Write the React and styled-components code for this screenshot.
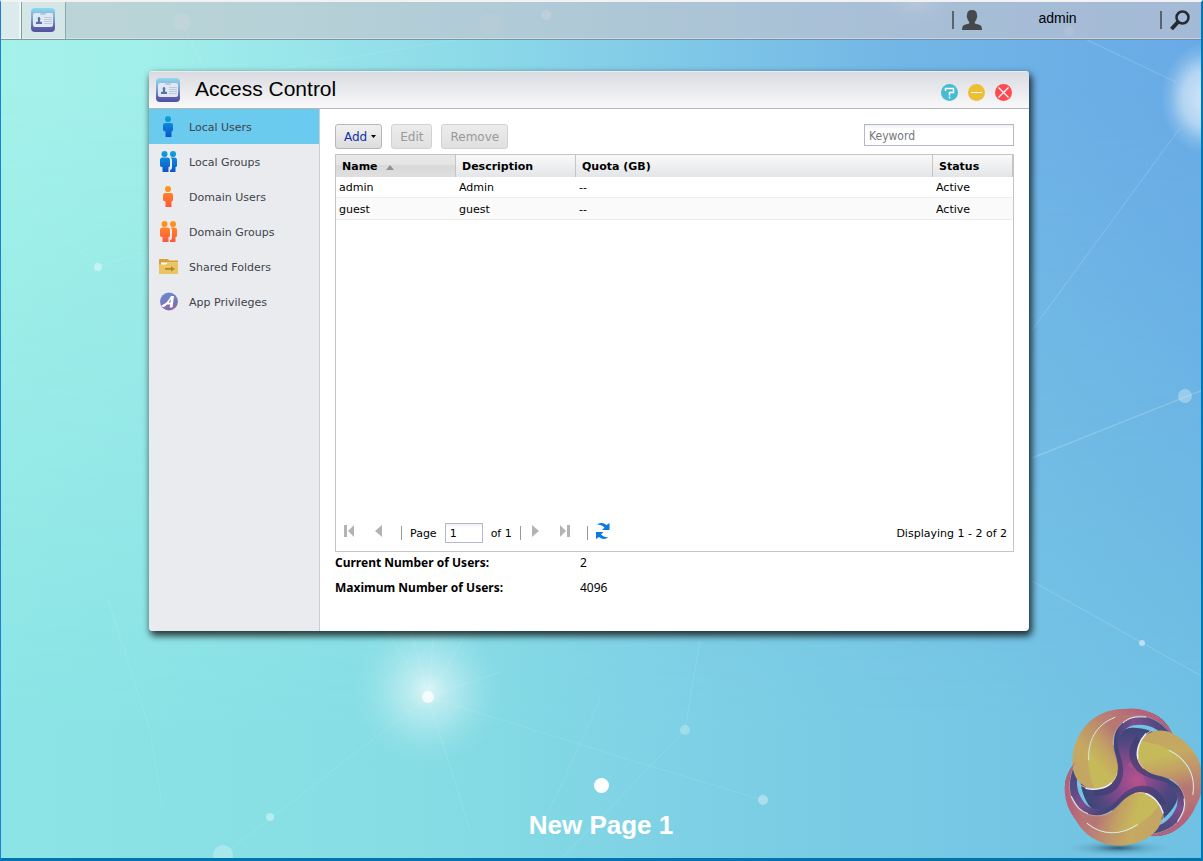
import React, { useState } from "react"
import styled, { createGlobalStyle, css } from "styled-components"

const GlobalStyle = createGlobalStyle`
    * {
        box-sizing: border-box;
    }
    body {
        margin: 0;
        font-family: "DejaVu Sans", Verdana, sans-serif;
        font-size: 11px;
        color: #000;
    }
    button, input {
        font-family: inherit;
        font-size: inherit;
    }
    svg {
        flex: none;
    }
`;

/* ---------- desktop ---------- */

const Desktop = styled.div`
    position: relative;
    min-height: 100vh;
    display: flex;
    flex-direction: column;
    border-top: 2px solid #f3f2f3;
    border-left: 1px solid #1a80dc;
    border-right: 2px solid #0078b4;
    border-bottom: 3px solid #0074ac;
    overflow: hidden;
`;

const WallpaperSvg = styled.svg`
    position: absolute;
    top: -2px;
    left: -1px;
    width: calc(100% + 3px);
    height: calc(100% + 5px);
    z-index: -1;
`;

const TopBar = styled.header`
    display: flex;
    align-items: stretch;
    height: 38px;
    background: rgba(200, 196, 204, 0.62);
    border-bottom: 1px solid rgba(70, 110, 120, 0.55);
    box-shadow: inset 0 -1px rgba(255, 255, 255, 0.35);
`;

const BarEdge = styled.div`
    width: 21px;
    background: rgba(255, 255, 255, 0.5);
    border-right: 1px solid #7f9fa1;
    box-shadow: inset -2px 0 rgba(255, 255, 255, 0.6);
`;

const TaskButton = styled.button`
    display: flex;
    width: 44px;
    padding: 6px 9px;
    border: 0;
    border-right: 1px solid #8ba9ab;
    background: rgba(255, 255, 255, 0.4);
    cursor: pointer;
`;

const BarRight = styled.div`
    display: flex;
    align-items: center;
    margin-left: auto;
    padding-bottom: 1px;
`;

const Divider = styled.span`
    width: 2px;
    height: 18px;
    background: #5d6268;
`;

const UserButton = styled.button`
    display: flex;
    align-items: center;
    width: 206px;
    height: 36px;
    padding: 0 0 0 8px;
    border: 0;
    background: none;
    font: 14px "Liberation Sans", Arial, sans-serif;
    color: #000;
    cursor: pointer;
`;

const UserName = styled.span`
    flex: 1;
    padding: 0 27px 5px 0;
    text-align: center;
`;

const SearchButton = styled.button`
    display: flex;
    padding: 0 11px 0 8px;
    border: 0;
    background: none;
    cursor: pointer;
`;

const PageIndicator = styled.nav`
    display: flex;
    flex-direction: column;
    align-items: center;
    margin-top: auto;
    padding-bottom: 18px;
`;

const PageDot = styled.button`
    width: 15px;
    height: 15px;
    padding: 0;
    border: 0;
    border-radius: 50%;
    background: #fff;
`;

const PageName = styled.div`
    margin-top: 17px;
    font: bold 26px/30px "Liberation Sans", Arial, sans-serif;
    color: #fff;
`;

const Watermark = styled.svg`
    position: absolute;
    right: -2px;
    bottom: -3px;
    width: 163px;
    height: 171px;
`;

/* ---------- window ---------- */

const Window = styled.section`
    display: flex;
    flex-direction: column;
    min-height: 560px;
    margin: 31px 172px 0 148px;
    border-radius: 4px;
    background: #fff;
    box-shadow: 2px 4px 7px 1px rgba(0, 0, 0, 0.75);
    overflow: hidden;
`;

const TitleBar = styled.div`
    display: flex;
    align-items: center;
    height: 38px;
    padding: 0 17px 0 7px;
    border-bottom: 1px solid #b5b6b9;
    background: linear-gradient(#d9dae0, #f9f9fa);
    box-shadow: inset 0 1px #ececee;
`;

const Title = styled.h1`
    flex: 1;
    margin: 0 0 0 15px;
    padding-bottom: 2px;
    font: 21px "Liberation Sans", Arial, sans-serif;
`;

const WindowButtons = styled.div`
    display: flex;
    gap: 10px;
    padding-top: 6px;
`;

const RoundButton = styled.button`
    display: flex;
    width: 17px;
    height: 17px;
    padding: 0;
    border: 0;
    border-radius: 50%;
    background: ${(props) => props.$color};
    cursor: pointer;
`;

const WindowBody = styled.div`
    display: flex;
    flex: 1;
`;

const Sidebar = styled.nav`
    flex: none;
    width: 171px;
    border-right: 1px solid #cbcdd2;
    background: #e9ebef;
`;

const SideItem = styled.button`
    display: flex;
    align-items: center;
    gap: 10px;
    width: 100%;
    height: 35px;
    padding: 1px 10px 0;
    border: 0;
    background: ${(props) => (props.$active ? "#6bcbef" : "none")};
    color: #40434a;
    text-align: left;
    cursor: pointer;
`;

const Content = styled.main`
    display: flex;
    flex: 1;
    flex-direction: column;
    min-width: 0;
    padding: 15px 15px 33px;
`;

const Toolbar = styled.div`
    display: flex;
    align-items: flex-start;
    gap: 9px;
    margin-bottom: 5px;
`;

const ToolButton = styled.button`
    display: flex;
    align-items: center;
    gap: 4px;
    height: 25px;
    padding: 0 ${(props) => (props.$menu ? "5px" : "8px")} 0 8px;
    border: 1px solid #b7b7b7;
    border-radius: 3px;
    background: linear-gradient(#f1f1f1, #dcdcdc);
    color: #1131a6;
    font-size: 12px;
    cursor: pointer;

    &:disabled {
        border-color: #d2d2d2;
        background: linear-gradient(#ececec, #e0e0e0);
        color: #999;
        cursor: default;
    }
`;

const field = css`
    border: 1px solid #b5b8c8;
    border-radius: 0;
    background: linear-gradient(#eef0f2, #fff 4px);
    outline: 0;
`;

const Keyword = styled.input`
    ${field}
    width: 150px;
    height: 22px;
    margin-left: auto;
    padding: 1px 4px 0;
    font: 12px "DejaVu Sans Condensed", "Noto Sans", sans-serif;

    &::placeholder {
        color: #75777c;
        opacity: 1;
    }
`;

const GridPanel = styled.div`
    display: flex;
    flex: 1;
    flex-direction: column;
    border: 1px solid #c5c5c5;
`;

const Table = styled.table`
    width: 100%;
    table-layout: fixed;
    border-collapse: separate;
    border-spacing: 0;
`;

const HeadCell = styled.th`
    height: 22px;
    padding: 0 6px;
    border-right: 1px solid #c5c5c5;
    background: ${(props) =>
        props.$sorted
            ? "linear-gradient(#e9e9ea, #e4e4e4 45%, #d9d9da 46%, #dfdfe0)"
            : "linear-gradient(#f9f9f9, #e4e5e7)"};
    text-align: left;
`;

const SortArrow = styled.svg`
    margin-left: 8px;
`;

const Row = styled.tr`
    height: ${(props) => (props.$odd ? "22px" : "21px")};
    background: ${(props) => (props.$odd ? "#fafafa" : "#fff")};
`;

const Cell = styled.td`
    padding: 1px 3px 0;
    border-bottom: 1px solid #ededed;
`;

const Pager = styled.div`
    display: flex;
    align-items: center;
    height: 36px;
    margin-top: auto;
    padding: 0 6px 0 7px;
`;

const PagerButton = styled.button`
    display: flex;
    align-items: center;
    justify-content: center;
    width: ${(props) => (props.$wide ? "14px" : "12px")};
    height: 20px;
    margin-bottom: 4px;
    padding: 0;
    border: 0;
    background: none;
`;

const PagerGap = styled.span`
    width: ${(props) => (props.$short ? "8px" : "18px")};
`;

const PagerLine = styled.span`
    width: 1px;
    height: 14px;
    margin: 0 8px;
    background: #98998f;
`;

const PageInput = styled.input`
    ${field}
    width: 38px;
    height: 20px;
    margin: 0 8px;
    padding: 0 4px;
`;

const Summary = styled.span`
    margin-left: auto;
`;

const Totals = styled.dl`
    display: grid;
    grid-template-columns: 245px 1fr;
    row-gap: 4px;
    margin: 0;
    font: 12px/21px "Noto Sans", Tahoma, sans-serif;
`;

const TotalLabel = styled.dt`
    font-weight: bold;
`;

const TotalValue = styled.dd`
    margin: 0;
`;

/* ---------- icons ---------- */

const CardIcon = ({ id }) => (
    <svg width="24" height="24" viewBox="0 0 24 24">
        <defs>
            <linearGradient id={id} x2="0" y2="1">
                <stop offset="0" stopColor="#8fd9f0" />
                <stop offset="0.5" stopColor="#7a9ccb" />
                <stop offset="0.8" stopColor="#5c62ab" />
                <stop offset="1" stopColor="#5450a0" />
            </linearGradient>
        </defs>
        <rect width="24" height="24" rx="4" fill={`url(#${id})`} />
        <rect x="2" y="5" width="20" height="14" rx="2" fill="#dfe8f3" />
        <rect x="9" y="5" width="6" height="2" rx="1" fill="#b7cbe0" />
        <path d="M8 9a1.500 1.800 0 0 1 1 3v1.500l2 .5v2H5v-2l2-.5V12a1.500 1.800 0 0 1 1-3z" fill="#5a70a8" />
        <path d="M13 9.500h8M13 11.500h8M13 13.500h8M13 15.500h8" stroke="#bcc9d8" />
    </svg>
)

const PersonIcon = ({ from, to, id, group }) => (
    <svg width="20" height="22" viewBox="0 0 20 22">
        <defs>
            <linearGradient id={id} x1="0" y1="0" x2="0" y2="22" gradientUnits="userSpaceOnUse">
                <stop offset="0" stopColor={from} />
                <stop offset="1" stopColor={to} />
            </linearGradient>
        </defs>
        <g fill={`url(#${id})`}>
            {group ? (
                <>
                    <circle cx="5.500" cy="3" r="3" />
                    <path d="M3 6.500h5.500Q11 6.500 11 9v5.500q0 1.500-1.500 1.500v5h-6v-5Q1 16 1 14.500V9q0-2.500 2-2.500z" />
                    <circle cx="14" cy="3" r="3" />
                    <path d="M11.500 6.500h4Q18 6.500 18 9v5.500q0 1.500-1.500 1.500v5H11v-2q2 0 2-3V9q0-1.500-1.500-2.500z" />
                </>
            ) : (
                <>
                    <circle cx="9" cy="3" r="3" />
                    <path d="M6.500 7h5.500q2 0 2 2v4.500q0 2-1.500 2V21h-6v-5.500Q4 15.500 4 13.500V9q0-2 2.500-2z" />
                </>
            )}
        </g>
    </svg>
)

const FolderIcon = () => (
    <svg width="20" height="18" viewBox="0 0 20 18">
        <path d="M0 2q0-1 1-1h7.500q1 0 1.500 1.500h9V8H0z" fill="#d6a137" />
        <path d="M2 4.500h17V9H2z" fill="#fff" />
        <path d="M0 6.500h7L9 4.500h10V15.500q0 .5-.5.5H.5Q0 16 0 15.500z" fill="#edc35f" />
        <path d="M6 10h6V8.200l4 2.700-4 2.700v-1.800H6z" fill="#ac8636" />
    </svg>
)

const AppIcon = () => (
    <svg width="20" height="20" viewBox="0 0 20 20">
        <defs>
            <linearGradient id="app-fill" x2="0.3" y2="1">
                <stop offset="0" stopColor="#5e91d2" />
                <stop offset="1" stopColor="#8c68ae" />
            </linearGradient>
        </defs>
        <circle cx="10" cy="9.500" r="9" fill="url(#app-fill)" />
        <path d="M2.500 13.500Q7 12 9.500 8L12 4h3l-1.500 11.500h-2.800l.4-3H8Q5.500 15.500 3.500 15z" fill="#fff" />
        <path d="M9.500 10.500h2L12.100 7z" fill="#7780c4" />
    </svg>
)

const UserIcon = () => (
    <svg width="20" height="20" viewBox="0 0 20 20">
        <path
            d="M10 0q5 0 5 5 .7 1 0 2.500Q14.300 10.500 12.800 12v1.500l5.200 1.500q2 1 2 5H0q0-4 2-5l5.200-1.500V12Q5.700 10.500 5 7.500 4.300 6 5 5q0-5 5-5z"
            fill="#45494e"
        />
    </svg>
)

const SearchIcon = () => (
    <svg width="20" height="21" viewBox="0 0 20 21">
        <circle cx="12.500" cy="7.500" r="6" fill="none" stroke="#252a2f" strokeWidth="2.500" />
        <path d="M8 12l-6.500 7" stroke="#252a2f" strokeWidth="4" />
    </svg>
)

const HelpIcon = () => (
    <svg width="17" height="17" viewBox="0 0 17 17" fill="none" stroke="#fff" strokeWidth="1.500">
        <path d="M4.500 7V4.500h8v4h-4v3M8.500 12.500v2" />
    </svg>
)

const MinimizeIcon = () => (
    <svg width="17" height="17" viewBox="0 0 17 17" stroke="#fff">
        <path d="M3 8.500h11" />
    </svg>
)

const CloseIcon = () => (
    <svg width="17" height="17" viewBox="0 0 17 17" stroke="#fff" strokeWidth="1.200">
        <path d="M3.500 3.500l10 10M13.500 3.500l-10 10" />
    </svg>
)

const PageArrow = ({ flip, bar }) => (
    <svg width="12" height="12" viewBox="0 0 12 12" fill="#b3b3b3">
        <g transform={flip ? "matrix(-1 0 0 1 12 0)" : undefined}>
            {bar && <path d="M1 0h3v12H1z" />}
            <path d={bar ? "M11 0v12L5 6z" : "M9 0v12L2 6z"} />
        </g>
    </svg>
)

const RefreshIcon = () => (
    <svg width="14" height="16" viewBox="0 0 14 16" fill="#0b78e3">
        <path d="M1 1.500Q6-1.500 10.500 2L13.500 0v7H6l2.500-2.500Q5.500 1.500 1 1.500z" />
        <path d="M12.500 14.500Q7.500 17.500 3 14L0 16V9h7.500L5 11.500Q8 14.500 12.500 14.500z" />
    </svg>
)

/* ---------- drawings ---------- */

const dots = [
    [182, 22, 9, 0.2],
    [546, 15, 5, 0.3],
    [490, 24, 11, 0.12],
    [1069, 31, 5, 0.15],
    [98, 267, 4, 0.4],
    [1185, 396, 7, 0.3],
    [1142, 643, 3, 0.5],
    [685, 730, 5, 0.25],
    [763, 800, 5, 0.35],
    [270, 817, 4, 0.4],
    [223, 855, 10, 0.25],
    [428, 697, 6, 0.75],
]

const Wallpaper = () => (
    <WallpaperSvg viewBox="0 0 1203 861" preserveAspectRatio="none" aria-hidden="true">
        <defs>
            <linearGradient id="sky-top" x2="1" y2="0">
                <stop offset="0" stopColor="#a4f2ea" />
                <stop offset="0.13" stopColor="#a1efea" />
                <stop offset="0.4" stopColor="#8cd9e9" />
                <stop offset="0.75" stopColor="#72b6e6" />
                <stop offset="1" stopColor="#68aae6" />
            </linearGradient>
            <linearGradient id="sky-bottom" x2="1" y2="0">
                <stop offset="0" stopColor="#8ce4e5" />
                <stop offset="0.35" stopColor="#86dde4" />
                <stop offset="0.6" stopColor="#7dcfe5" />
                <stop offset="1" stopColor="#70c0e3" />
            </linearGradient>
            <linearGradient id="fade" x2="0" y2="1">
                <stop offset="0.1" stopColor="#000" />
                <stop offset="0.85" stopColor="#fff" />
            </linearGradient>
            <mask id="fade-mask">
                <rect width="1203" height="861" fill="url(#fade)" />
            </mask>
            <radialGradient id="glow">
                <stop offset="0" stopColor="#fff" stopOpacity="0.7" />
                <stop offset="0.25" stopColor="#fff" stopOpacity="0.42" />
                <stop offset="0.6" stopColor="#fff" stopOpacity="0.16" />
                <stop offset="0.8" stopColor="#fff" stopOpacity="0.05" />
                <stop offset="1" stopColor="#fff" stopOpacity="0" />
            </radialGradient>
            <radialGradient id="sun">
                <stop offset="0" stopColor="#fff" stopOpacity="0.7" />
                <stop offset="0.5" stopColor="#fff" stopOpacity="0.5" />
                <stop offset="0.8" stopColor="#fff" stopOpacity="0.14" />
                <stop offset="1" stopColor="#fff" stopOpacity="0" />
            </radialGradient>
        </defs>
        <rect width="1203" height="861" fill="url(#sky-top)" />
        <rect width="1203" height="861" fill="url(#sky-bottom)" mask="url(#fade-mask)" />
        <g stroke="#fff" fill="none" opacity="0.1">
            <path d="M182 22L210 80 480 36M30 205L98 267 150 250M108 600L150 730 162 805M223 855L428 697L500 672" />
            <path d="M428 697L380 620M428 697L408 620M428 697L435 620M428 697L475 620M428 697L470 830" />
            <path d="M428 697L560 738 630 760 763 800M560 860L685 730 700 640M545 820L600 700" />
        </g>
        <g stroke="#fff" fill="none" opacity="0.18">
            <path d="M1032 458L1203 390" strokeWidth="1.500" />
            <path d="M1032 330L1180 128M1032 581L1203 677M1087 40L1176 82" />
        </g>
        <circle cx="428" cy="690" r="76" fill="url(#glow)" />
        <ellipse cx="1205" cy="98" rx="44" ry="56" fill="url(#sun)" />
        <ellipse cx="915" cy="0" rx="40" ry="26" fill="url(#glow)" opacity="0.5" />
        {dots.map(([x, y, r, opacity]) => (
            <circle key={`${x}-${y}`} cx={x} cy={y} r={r} fill="#fff" opacity={opacity} />
        ))}
    </WallpaperSvg>
)

// the three arms of the swirl are one arm turned round (275, 265)
const arms = [0, 120, 240].map((a) => `rotate(${a} 275 265)`)

const Swirl = () => (
    <Watermark viewBox="0 0 489 513" aria-hidden="true">
        <defs>
            <radialGradient id="core" cx="262" cy="278" r="165" gradientUnits="userSpaceOnUse">
                <stop offset="0" stopColor="#b8528c" />
                <stop offset="0.4" stopColor="#854a8d" />
                <stop offset="0.75" stopColor="#524780" />
                <stop offset="1" stopColor="#3d4679" />
            </radialGradient>
            <linearGradient id="outer" x1="290" y1="60" x2="110" y2="230" gradientUnits="userSpaceOnUse">
                <stop offset="0" stopColor="#b5637b" />
                <stop offset="0.4" stopColor="#bb8572" />
                <stop offset="0.8" stopColor="#c5aa60" />
                <stop offset="1" stopColor="#c4a663" />
            </linearGradient>
            <linearGradient id="inner" x1="155" y1="200" x2="235" y2="130" gradientUnits="userSpaceOnUse">
                <stop offset="0" stopColor="#c6b95a" />
                <stop offset="0.45" stopColor="#c3a164" />
                <stop offset="1" stopColor="#b67674" />
            </linearGradient>
            <linearGradient id="band" x1="225" y1="150" x2="400" y2="130" gradientUnits="userSpaceOnUse">
                <stop offset="0" stopColor="#3f4578" />
                <stop offset="0.35" stopColor="#7c4f8d" />
                <stop offset="0.7" stopColor="#544a82" />
                <stop offset="1" stopColor="#434b80" />
            </linearGradient>
            <radialGradient id="ground">
                <stop offset="0" stopColor="#2a5269" stopOpacity="0.9" />
                <stop offset="0.5" stopColor="#3c7690" stopOpacity="0.3" />
                <stop offset="1" stopColor="#5ba4c0" stopOpacity="0" />
            </radialGradient>
        </defs>
        <ellipse cx="235" cy="474" rx="155" ry="24" fill="url(#ground)" />
        {arms.map((turn) => (
            <path
                key={turn}
                transform={turn}
                d="M228 190C223 142 242 115 275 113C310 112 345 124 366 142C325 150 300 180 306 214L318 270L275 300L215 290C238 260 234 220 228 190z"
                fill="url(#core)"
            />
        ))}
        {/* dark rim that each bulb throws on the core */}
        {arms.map((turn) => (
            <path
                key={turn}
                transform={turn}
                d="M224 165C224 200 246 215 238 258C228 300 196 312 160 306"
                fill="none"
                stroke="#3a3f70"
                strokeWidth="20"
                opacity="0.7"
            />
        ))}
        {arms.map((turn) => (
            <path
                key={turn}
                transform={turn}
                d="M230 200C208 140 232 70 305 64C355 66 392 104 402 150L372 140C352 112 318 100 280 106C248 114 234 140 230 200z"
                fill="url(#band)"
            />
        ))}
        {arms.map((turn) => (
            <g key={turn} transform={turn}>
                <path
                    d="M97 222C95 135 155 57 250 57C325 47 385 86 402 145C378 100 335 76 300 78C250 80 215 120 220 165C222 200 240 215 230 255C222 285 190 299 160 298C125 292 99 265 97 222z"
                    fill="url(#outer)"
                />
                <path
                    d="M165 297C140 245 128 150 190 100C220 80 260 72 300 78C250 80 215 120 220 165C222 200 240 215 230 255C222 285 195 297 165 297z"
                    fill="url(#inner)"
                />
                <g fill="none" strokeLinecap="round">
                    <path d="M146 210C143 155 165 105 225 82" stroke="#d5ebe6" strokeWidth="3" />
                    <path d="M219 165C215 120 250 80 300 78C335 78 370 100 394 134" stroke="#d0a5a0" strokeWidth="2" />
                    <path d="M250 98C268 82 285 79 318 81" stroke="#e4f2f2" strokeWidth="3" />
                    <path d="M118 284C165 312 222 288 231 250" stroke="#ddb9ae" strokeWidth="3" />
                    <path d="M138 295C165 302 195 296 214 279" stroke="#e7f4f5" strokeWidth="4" />
                </g>
            </g>
        ))}
    </Watermark>
)

/* ---------- data ---------- */

const blue = { from: "#0fa5dc", to: "#0c50cc" }
const orange = { from: "#ff9a1c", to: "#ff5340" }

const sections = [
    { name: "Local Users", icon: <PersonIcon id="lu" {...blue} /> },
    { name: "Local Groups", icon: <PersonIcon id="lg" group {...blue} /> },
    { name: "Domain Users", icon: <PersonIcon id="du" {...orange} /> },
    { name: "Domain Groups", icon: <PersonIcon id="dg" group {...orange} /> },
    { name: "Shared Folders", icon: <FolderIcon /> },
    { name: "App Privileges", icon: <AppIcon /> },
]

const users = [
    { name: "admin", description: "Admin", quota: "--", status: "Active" },
    { name: "guest", description: "guest", quota: "--", status: "Active" },
]

const UserGrid = () => {

    const [page, setPage] = useState("1")

    return (
        <GridPanel>
            <Table>
                <colgroup>
                    <col width="120" />
                    <col width="120" />
                    <col />
                    <col width="80" />
                </colgroup>
                <thead>
                    <tr>
                        <HeadCell $sorted>
                            Name
                            <SortArrow width="8" height="5" viewBox="0 0 8 5">
                                <path d="M4 0l4 5H0z" fill="#929292" />
                            </SortArrow>
                        </HeadCell>
                        <HeadCell>Description</HeadCell>
                        <HeadCell>Quota (GB)</HeadCell>
                        <HeadCell>Status</HeadCell>
                    </tr>
                </thead>
                <tbody>
                    {users.map((user, i) => (
                        <Row key={user.name} $odd={i % 2 === 1}>
                            <Cell>{user.name}</Cell>
                            <Cell>{user.description}</Cell>
                            <Cell>{user.quota}</Cell>
                            <Cell>{user.status}</Cell>
                        </Row>
                    ))}
                </tbody>
            </Table>
            <Pager>
                <PagerButton aria-label="First page"><PageArrow bar /></PagerButton>
                <PagerGap />
                <PagerButton aria-label="Previous page"><PageArrow /></PagerButton>
                <PagerGap $short />
                <PagerLine />
                <label htmlFor="page">Page</label>
                <PageInput id="page" value={page} onChange={(e) => setPage(e.target.value)} />
                <span>of 1</span>
                <PagerLine />
                <PagerButton aria-label="Next page"><PageArrow flip /></PagerButton>
                <PagerGap />
                <PagerButton aria-label="Last page"><PageArrow flip bar /></PagerButton>
                <PagerGap $short />
                <PagerLine />
                <PagerButton $wide aria-label="Refresh"><RefreshIcon /></PagerButton>
                <Summary>Displaying 1 - 2 of 2</Summary>
            </Pager>
        </GridPanel>
    )
}

const AccessControl = () => {

    const [active, setActive] = useState("Local Users")

    return (
        <Window>
            <TitleBar>
                <CardIcon id="card-window" />
                <Title>Access Control</Title>
                <WindowButtons>
                    <RoundButton $color="#45bcd2" aria-label="Help"><HelpIcon /></RoundButton>
                    <RoundButton $color="#eebf35" aria-label="Minimize"><MinimizeIcon /></RoundButton>
                    <RoundButton $color="#fb4b50" aria-label="Close"><CloseIcon /></RoundButton>
                </WindowButtons>
            </TitleBar>
            <WindowBody>
                <Sidebar>
                    {sections.map(({ name, icon }) => (
                        <SideItem key={name} $active={name === active} onClick={() => setActive(name)}>
                            {icon}
                            {name}
                        </SideItem>
                    ))}
                </Sidebar>
                <Content>
                    <Toolbar>
                        <ToolButton $menu>
                            Add
                            <svg width="5" height="3" viewBox="0 0 5 3"><path d="M0 0h5L2.500 3z" /></svg>
                        </ToolButton>
                        <ToolButton disabled>Edit</ToolButton>
                        <ToolButton disabled>Remove</ToolButton>
                        <Keyword placeholder="Keyword" aria-label="Keyword" />
                    </Toolbar>
                    <UserGrid />
                    <Totals>
                        <TotalLabel>Current Number of Users:</TotalLabel>
                        <TotalValue>2</TotalValue>
                        <TotalLabel>Maximum Number of Users:</TotalLabel>
                        <TotalValue>4096</TotalValue>
                    </Totals>
                </Content>
            </WindowBody>
        </Window>
    )
}

const App = () => (
    <>
        <GlobalStyle />
        <Desktop>
            <Wallpaper />
            <TopBar>
                <BarEdge />
                <TaskButton aria-label="Access Control"><CardIcon id="card-task" /></TaskButton>
                <BarRight>
                    <Divider />
                    <UserButton>
                        <UserIcon />
                        <UserName>admin</UserName>
                    </UserButton>
                    <Divider />
                    <SearchButton aria-label="Search"><SearchIcon /></SearchButton>
                </BarRight>
            </TopBar>
            <AccessControl />
            <PageIndicator>
                <PageDot aria-label="Page 1" />
                <PageName>New Page 1</PageName>
            </PageIndicator>
            <Swirl />
        </Desktop>
    </>
)

export default App
